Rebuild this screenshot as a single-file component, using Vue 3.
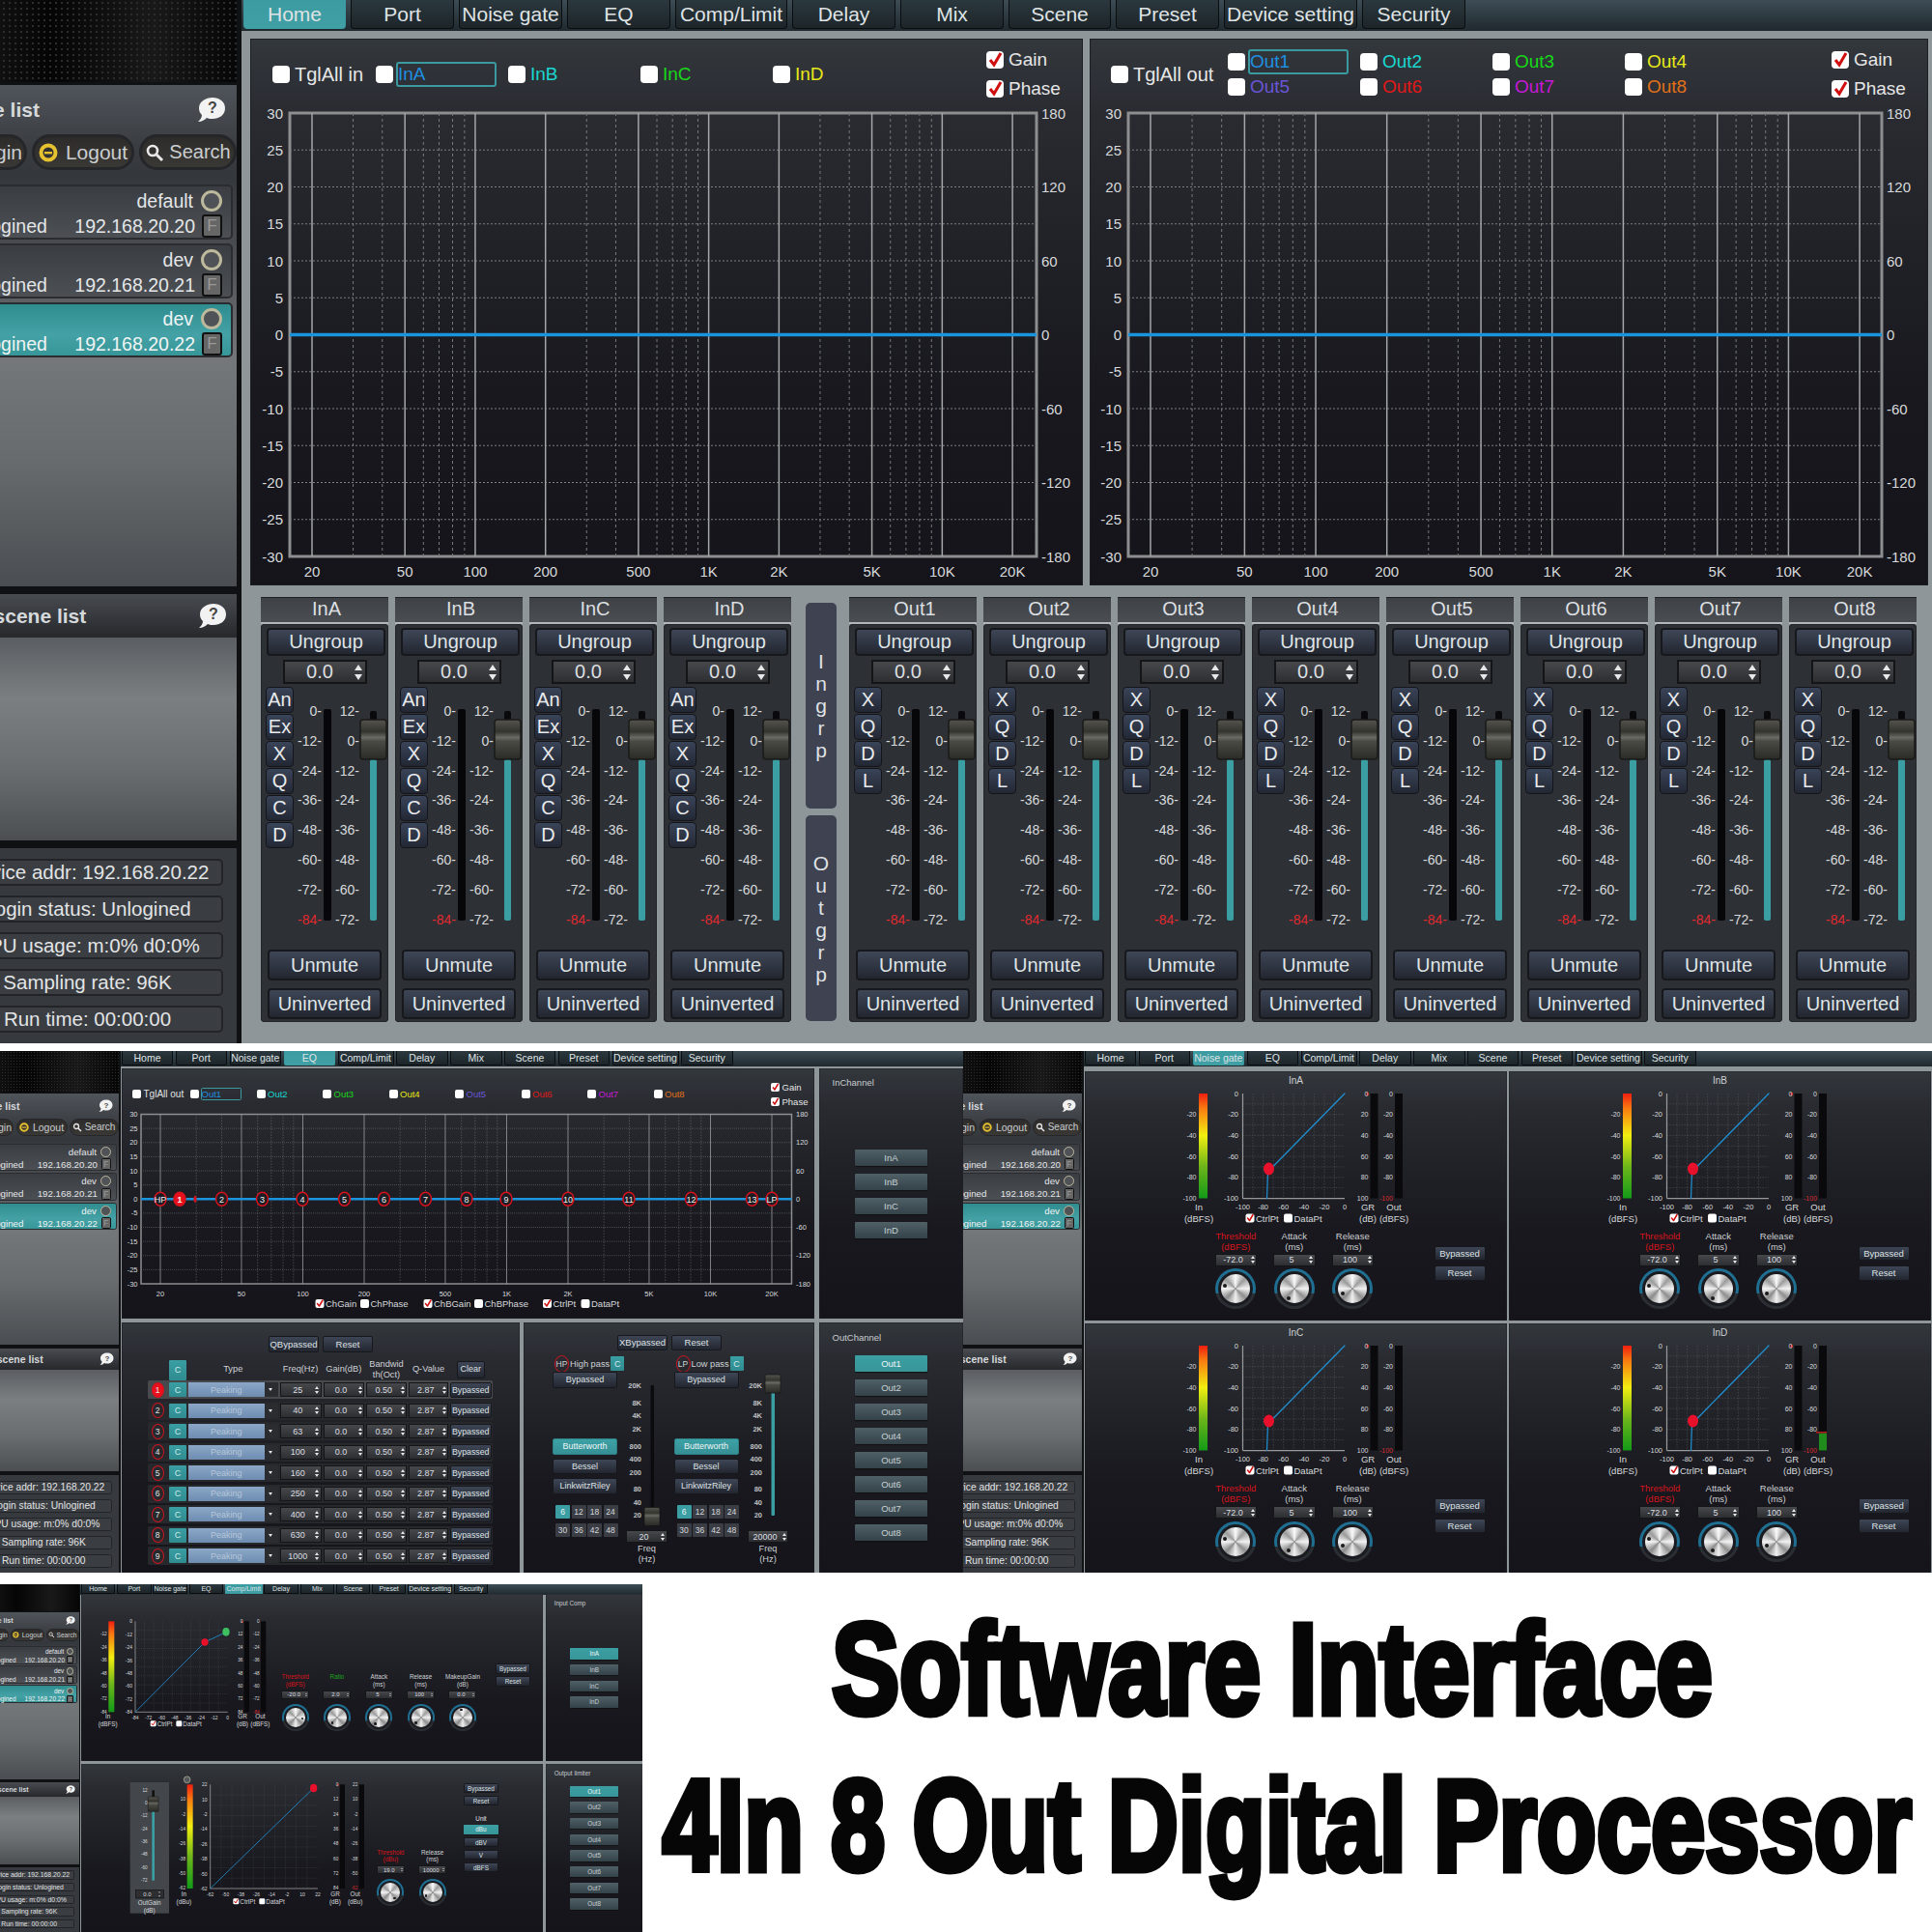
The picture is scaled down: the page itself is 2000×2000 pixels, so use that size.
<script setup>
import { h } from 'vue'

const tabs = [
  ['Home', 106], ['Port', 107], ['Noise gate', 107], ['EQ', 107], ['Comp/Limit', 116], ['Delay', 107],
  ['Mix', 107], ['Scene', 106], ['Preset', 107], ['Device setting', 138], ['Security', 107],
]
const shots = [
  { id: 'home', tab: 0 },
  { id: 'eq', tab: 3 },
  { id: 'ng', tab: 2 },
  { id: 'comp', tab: 4 },
]
const devices = [
  { name: 'default', ip: '192.168.20.20' },
  { name: 'dev', ip: '192.168.20.21' },
  { name: 'dev', ip: '192.168.20.22', on: true },
]
const status = ['Device addr: 192.168.20.22', 'Login status: Unlogined', 'CPU usage: m:0% d0:0%', 'Sampling rate: 96K', 'Run time: 00:00:00']

/* ---- tiny SVG scene renderer ---- */
function S(w, hh) { return { w, h: hh, r: [], l: [], p: [], c: [], t: [] } }
const FONT = "'Liberation Sans', Arial, sans-serif"
const Draw = (props) => {
  const s = props.s
  const el = []
  el.push(h('defs', [
    h('linearGradient', { id: 'mg', x1: 0, y1: 0, x2: 0, y2: 1 }, [
      h('stop', { offset: '0', 'stop-color': '#f01e10' }),
      h('stop', { offset: '.14', 'stop-color': '#f87a10' }),
      h('stop', { offset: '.4', 'stop-color': '#f2ee10' }),
      h('stop', { offset: '.7', 'stop-color': '#6cb51a' }),
      h('stop', { offset: '1', 'stop-color': '#129a18' }),
    ]),
    h('linearGradient', { id: 'fk', x1: 0, y1: 0, x2: 0, y2: 1 }, [
      h('stop', { offset: '0', 'stop-color': '#55544f' }),
      h('stop', { offset: '.3', 'stop-color': '#34342f' }),
      h('stop', { offset: '.45', 'stop-color': '#6a6a64' }),
      h('stop', { offset: '.55', 'stop-color': '#4a4a45' }),
      h('stop', { offset: '1', 'stop-color': '#2a2a26' }),
    ]),
  ]))
  s.r.forEach(r => el.push(h('rect', { x: r.x, y: r.y, width: r.w, height: r.h, fill: r.f, rx: r.rx || 0, stroke: r.s || 'none', 'stroke-width': r.sw || 0 })))
  s.l.forEach(l => el.push(h('line', { x1: l[0], y1: l[1], x2: l[2], y2: l[3], stroke: l[4], 'stroke-width': l[5], 'stroke-dasharray': l[6] || 'none' })))
  s.p.forEach(p => el.push(h('path', { d: p.d, stroke: p.s || 'none', 'stroke-width': p.sw || 0, fill: p.f || 'none', 'stroke-linecap': 'round', 'stroke-linejoin': 'round' })))
  s.c.forEach(c => el.push(h('ellipse', { cx: c.x, cy: c.y, rx: c.r, ry: c.ry || c.r, fill: c.f || 'none', stroke: c.s || 'none', 'stroke-width': c.sw || 0 })))
  s.t.forEach(t => el.push(h('text', { x: t.x, y: t.y, 'text-anchor': t.a || 'start', fill: t.f || '#d8dadc', 'font-size': t.z || 15, 'font-weight': t.b ? 700 : 400, 'dominant-baseline': 'central' }, t.s)))
  return h('svg', { width: s.w, height: s.h, viewBox: `0 0 ${s.w} ${s.h}`, 'font-family': FONT }, el)
}
Draw.props = ['s']

function check(s, x, y, label, on, z = 19) {
  s.r.push({ x: x - 9, y: y - 9, w: 18, h: 18, f: '#fff', rx: 4 })
  if (on) s.p.push({ d: `M${x - 5} ${y} L${x - 1} ${y + 5} L${x + 6} ${y - 7}`, s: '#d01010', sw: 3 })
  s.t.push({ x: x + 12, y, s: label, z })
}

function freqPlot(o) {
  const s = S(o.w, o.h)
  const X = f => o.x20 + o.dec * Math.log10(f / 20)
  const Y = d => o.y0 + (30 - d) / 60 * (o.y1 - o.y0)
  for (let d = 25; d >= -25; d -= 5) if (d) s.l.push([o.x0, Y(d), o.x1, Y(d), '#7c7e82', 1, '2 2'])
  ;[30, 40, 60, 70, 80, 90, 300, 400, 600, 700, 800, 900, 3000, 4000, 6000, 7000, 8000, 9000].forEach(f =>
    s.l.push([X(f), o.y0, X(f), o.y1, '#77797c', 1, '3 3']))
  const maj = [[20, '20'], [50, '50'], [100, '100'], [200, '200'], [500, '500'], [1000, '1K'], [2000, '2K'], [5000, '5K'], [10000, '10K'], [20000, '20K']]
  maj.forEach(m => {
    s.l.push([X(m[0]), o.y0, X(m[0]), o.y1, '#a4a6a8', 1.5])
    s.t.push({ x: X(m[0]), y: o.fy, s: m[1], a: 'middle' })
  })
  s.r.push({ x: o.x0, y: o.y0, w: o.x1 - o.x0, h: o.y1 - o.y0, f: 'none', s: '#8c8e90', sw: 3 })
  for (let d = 30; d >= -30; d -= 5) s.t.push({ x: o.lx, y: Y(d), s: String(d), a: 'end' })
  ;[[30, '180'], [20, '120'], [10, '60'], [0, '0'], [-10, '-60'], [-20, '-120'], [-30, '-180']].forEach(r =>
    s.t.push({ x: o.rx, y: Y(r[0]), s: r[1] }))
  s.l.push([o.x0, Y(0), o.x1, Y(0), '#1a94dc', o.bw || 3.5])
  return s
}
const plotIn = freqPlot({ w: 862, h: 506, x0: 41, x1: 814, y0: 17, y1: 476, x20: 64, dec: 241.7, lx: 34, rx: 819, fy: 491 })
const plotOut = freqPlot({ w: 868, h: 506, x0: 40, x1: 820, y0: 17, y1: 476, x20: 63, dec: 244.7, lx: 33, rx: 825, fy: 491 })

const plotEq = freqPlot({ w: 1434, h: 440, x0: 40, x1: 1387, y0: 17, y1: 368, x20: 80, dec: 422, lx: 33, rx: 1396, fy: 388, bw: 5 })
;[['HP', 80], ['1', 120], ['2', 207], ['3', 291], ['4', 374], ['5', 461], ['6', 543], ['7', 629], ['8', 714], ['9', 796], ['10', 924], ['11', 1050], ['12', 1179], ['13', 1305], ['LP', 1346]].forEach(p => {
  plotEq.c.push({ x: p[1], y: 192.5, r: 12, ry: 14, f: p[0] === '1' ? '#e8101c' : '#1c1d24', s: '#d8121c', sw: 3 })
  plotEq.t.push({ x: p[1], y: 193, s: p[0], a: 'middle', z: 18, f: '#f0f0f0', b: p[0] === '1' })
})
plotEq.c.push({ x: 152, y: 192.5, r: 3, ry: 7, f: '#d8121c' })
;[[410, 'ChGain', 1], [503, 'ChPhase', 0], [634, 'ChBGain', 1], [739, 'ChBPhase', 0], [881, 'CtrlPt', 1], [960, 'DataPt', 0]].forEach(c =>
  check(plotEq, c[0], 409, c[1], c[2]))

function dyn(o) {
  const s = S(o.w, o.h)
  const n = o.ticks.length - 1
  const Y = i => o.y0 + i / n * (o.y1 - o.y0)
  const gw = o.gx1 - o.gx0
  for (let i = 1; i < 10; i++) {
    const x = o.gx0 + gw * i / 10
    const y = o.y0 + (o.y1 - o.y0) * i / 10
    s.l.push([x, o.y0, x, o.y1, '#5c5e62', 1, '3 3'])
    s.l.push([o.gx0, y, o.gx1, y, '#5c5e62', 1, '3 3'])
  }
  s.l.push([o.gx0, o.y0, o.gx0, o.y1, '#96989a', 2.5])
  s.l.push([o.gx0, o.y1, o.gx1, o.y1, '#96989a', 2.5])
  s.r.push({ x: o.inX, y: o.y0, w: 18, h: o.y1 - o.y0, f: 'url(#mg)' })
  s.r.push({ x: o.grX, y: o.y0, w: 16, h: o.y1 - o.y0, f: '#0a0a0c' })
  s.r.push({ x: o.outX, y: o.y0, w: 16, h: o.y1 - o.y0, f: '#0a0a0c' })
  o.ticks.forEach((t, i) => {
    if (i) s.t.push({ x: o.inX - 5, y: Y(i), s: t, a: 'end', z: 14 })
    s.t.push({ x: o.gx0 - 9, y: Y(i), s: t, a: 'end', z: 15 })
    const tx = o.gx0 + gw * i / n
    s.t.push({ x: tx, y: o.y1 + 17, s: o.ticks[n - i], a: 'middle', z: 15 })
    s.t.push({ x: o.grX - 4, y: Y(i), s: o.gr ? o.gr[i] : t.replace('-', ''), a: 'end', z: 14 })
    if (i < n) s.t.push({ x: o.outX - 4, y: Y(i), s: t, a: 'end', z: 14 })
  })
  s.r.push({ x: o.grX - 8, y: o.y0 - 2, w: 5, h: 6, f: '#d8181c', rx: 2 })
  s.t.push({ x: o.outX - 4, y: o.y1, s: o.ticks[n], a: 'end', z: 14, f: '#d82a30' })
  s.t.push({ x: o.inL, y: o.ly, s: 'In', a: 'middle', z: 19 })
  s.t.push({ x: o.inL, y: o.ly + 23, s: o.unit, a: 'middle', z: 19 })
  s.t.push({ x: o.grL, y: o.ly, s: 'GR', a: 'middle', z: 19 })
  s.t.push({ x: o.grL, y: o.ly + 23, s: '(dB)', a: 'middle', z: 19 })
  s.t.push({ x: o.outL, y: o.ly, s: 'Out', a: 'middle', z: 19 })
  s.t.push({ x: o.outL, y: o.ly + 23, s: o.unit, a: 'middle', z: 19 })
  check(s, o.cb1, o.ly + 23, 'CtrlPt', 1)
  check(s, o.cb2, o.ly + 23, 'DataPt', 0)
  s.p.push({ d: o.curve, s: '#1f8fd0', sw: 2.5 })
  o.dots.forEach(d => s.c.push({ x: d[0], y: d[1], r: 11, ry: d[3] || 11, f: d[2] }))
  return s
}
const t100 = ['0', '-20', '-40', '-60', '-80', '-100']
const ngBase = { w: 874, h: 290, ticks: t100, y0: 16, y1: 233, inX: 236, gx0: 327, gx1: 538, grX: 591, outX: 642, inL: 236, grL: 586, outL: 640, ly: 251, unit: '(dBFS)', cb1: 342, cb2: 421, curve: 'M377 233 L379 178 L538 16', dots: [[381, 172, '#e8102a', 13]] }
const ngScene = dyn(ngBase)
const ngSig = dyn(ngBase)
ngSig.r.push({ x: 642, y: 197, w: 16, h: 36, f: '#1f8c1c' })
ngSig.r.push({ x: 636, y: 194, w: 22, h: 3, f: '#b81c1c' })
const ngPanels = [['InA', ngScene], ['InB', ngScene], ['InC', ngScene], ['InD', ngSig]]

const t84 = ['0', '-12', '-24', '-36', '-48', '-60', '-72', '-84']
const compTop = dyn({ w: 601, h: 518, ticks: t84, y0: 85, y1: 367, inX: 85, gx0: 168, gx1: 455, grX: 506, outX: 558, inL: 83, grL: 501, outL: 556, ly: 380, unit: '(dBFS)', cb1: 224, cb2: 304, curve: 'M168 367 L384 150 L452 118', dots: [[384, 150, '#e8102a'], [450, 118, '#3cc060', 13]] })
const t62 = ['22', '10', '-2', '-14', '-26', '-38', '-50', '-62']
const compLow = dyn({ w: 897, h: 522, ticks: t62, gr: ['0', '12', '24', '36', '48', '60', '72', '84'], y0: 64, y1: 387, inX: 329, gx0: 401, gx1: 735, grX: 803, outX: 863, inL: 319, grL: 789, outL: 851, ly: 404, unit: '(dBu)', cb1: 481, cb2: 562, curve: 'M401 387 L722 75', dots: [[722, 75, '#e8102a', 13]] })
compLow.r.unshift({ x: 152, y: 57, w: 121, h: 407, f: '#43474b' })
;['12', '0', '-12', '-24', '-36', '-48', '-60', '-72'].forEach((t, i) => compLow.t.push({ x: 206, y: 82 + i * 40, s: t, a: 'end', z: 14 }))
compLow.r.push({ x: 220, y: 82, w: 8, h: 40, f: '#111' })
compLow.r.push({ x: 220, y: 145, w: 8, h: 217, f: '#3a9ea3' })
compLow.r.push({ x: 208, y: 102, w: 32, h: 46, f: 'url(#fk)', s: '#111', sw: 1.5, rx: 2 })
compLow.r.push({ x: 169, y: 392, w: 87, h: 25, f: '#2c2e32', s: '#111', sw: 2 })
compLow.t.push({ x: 205, y: 405, s: '0.0', a: 'middle', z: 18 })
compLow.p.push({ d: 'M240 400 l3 -4 l3 4 Z M240 409 l3 4 l3 -4 Z', f: '#ddd' })
compLow.t.push({ x: 212, y: 432, s: 'OutGain', a: 'middle', z: 19 })
compLow.t.push({ x: 212, y: 455, s: '(dB)', a: 'middle', z: 19 })
compLow.c.push({ x: 329, y: 49, r: 10, f: '#55585a', s: '#a8aa9a', sw: 2.5 })

/* strip meter */
function stripScene() {
  const s = S(96, 250)
  const st = 30.8
  s.r.push({ x: 29, y: 23, w: 8, h: 219, f: '#07070a', rx: 2 })
  s.r.push({ x: 77, y: 25, w: 7, h: 50, f: '#0a0a0c', rx: 2 })
  s.r.push({ x: 77, y: 75, w: 7, h: 167, f: '#3a9ea3', rx: 2 })
  s.r.push({ x: 67, y: 34, w: 27, h: 41, f: 'url(#fk)', s: '#1a1a18', sw: 1.5, rx: 3 })
  ;['0-', '-12-', '-24-', '-36-', '-48-', '-60-', '-72-'].forEach((t, i) => s.t.push({ x: 27, y: 25 + i * st, s: t, a: 'end', z: 14 }))
  s.t.push({ x: 27, y: 25 + 7 * st, s: '-84-', a: 'end', z: 14, f: '#e02a30' })
  ;['12-', '0-', '-12-', '-24-', '-36-', '-48-', '-60-', '-72-'].forEach((t, i) => s.t.push({ x: 66, y: 25 + i * st, s: t, a: 'end', z: 14 }))
  return s
}
const meter = stripScene()
const strips = (names, keys) => names.map(n => ({ n, keys }))
const inStrips = strips(['InA', 'InB', 'InC', 'InD'], ['An', 'Ex', 'X', 'Q', 'C', 'D'])
const outStrips = strips(['Out1', 'Out2', 'Out3', 'Out4', 'Out5', 'Out6', 'Out7', 'Out8'], ['X', 'Q', 'D', 'L'])

const inCh = [['InA', '#1e8fe0'], ['InB', '#19d8d0'], ['InC', '#18d818'], ['InD', '#e8e818']]
const outCh = [['Out1', '#1e8fe0'], ['Out2', '#19d8d0'], ['Out3', '#18d818'], ['Out4', '#e8e818'], ['Out5', '#6a55d8'], ['Out6', '#e01818'], ['Out7', '#c818d8'], ['Out8', '#e07018']]

/* EQ table */
const eqRows = ['25', '40', '63', '100', '160', '250', '400', '630', '1000'].map((f, i) => ({ n: i + 1, f }))

function xFilter(isLP) {
  const s = S(115, 325)
  const sc = [['20K', 26], ['8K', 62], ['4K', 88], ['2K', 116], ['800', 152], ['400', 179], ['200', 207], ['80', 241], ['40', 269], ['20', 295]]
  sc.forEach(v => s.t.push({ x: 42, y: v[1], s: v[0], a: 'end', z: 15, b: true, f: '#bfc1c3' }))
  s.r.push({ x: 61, y: 26, w: 7, h: 270, f: isLP ? '#3a9ea3' : '#0b0b0e', rx: 2 })
  s.r.push({ x: 48, y: isLP ? 4 : 279, w: 32, h: 38, f: 'url(#fk)', s: '#161616', sw: 1.5, rx: 3 })
  return s
}
const xFilters = [
  { tag: 'HP', name: 'High pass', scene: xFilter(false), f: '20' },
  { tag: 'LP', name: 'Low pass', scene: xFilter(true), f: '20000' },
]
const slopes = ['6', '12', '18', '24', '30', '36', '42', '48']

const dot = (a) => ({ left: 50 + 38 * Math.cos(a * Math.PI / 180) + '%', top: 50 + 38 * Math.sin(a * Math.PI / 180) + '%' })
const ngKnobs = [
  { a: 'Threshold', b: '(dBFS)', v: '-72.0', red: 1, d: dot(195) },
  { a: 'Attack', b: '(ms)', v: '5', d: dot(120) },
  { a: 'Release', b: '(ms)', v: '100', d: dot(155) },
]
const compKnobs = [
  { a: 'Threshold', b: '(dBFS)', v: '-20.0', red: 1, d: dot(10) },
  { a: 'Ratio', b: '', v: '2.0', green: 1, d: dot(130) },
  { a: 'Attack', b: '(ms)', v: '5', d: dot(120) },
  { a: 'Release', b: '(ms)', v: '100', d: dot(130) },
  { a: 'MakeupGain', b: '(dB)', v: '0.0', d: dot(260) },
]
const limKnobs = [
  { a: 'Threshold', b: '(dBu)', v: '19.0', red: 1, d: dot(55) },
  { a: 'Release', b: '(ms)', v: '10000', d: dot(150) },
]
</script>

<template>
  <div class="page">
    <div v-for="s in shots" :key="s.id" class="frame" :class="'f-' + s.id">
      <div class="win">
        <!-- sidebar -->
        <aside class="side">
          <div class="side-in">
            <div class="logo"></div>
            <section class="dev-panel">
              <div class="side-head">
                <b class="side-title t-dev">Device list</b>
                <svg class="help" width="30" height="28" viewBox="0 0 30 28"><path d="M16 1c7 0 13 4 13 11s-6 11-13 11c-2 0-4 0-6-1-2 2-5 4-9 4 2-2 4-4 4-7C3 17 2 15 2 12 2 5 9 1 16 1z" fill="#f2f2f2"/><text x="16" y="17" font-size="16" font-weight="700" text-anchor="middle" fill="#444">?</text></svg>
              </div>
              <div class="pills">
                <span class="pill p-login">Login</span>
                <span class="pill p-logout"><svg width="20" height="20" viewBox="0 0 20 20"><circle cx="10" cy="10" r="7.5" fill="none" stroke="#e6c230" stroke-width="4"/><rect x="6" y="9" width="8" height="2.4" fill="#e6c230"/></svg>Logout</span>
                <span class="pill p-search"><svg width="20" height="20" viewBox="0 0 20 20"><circle cx="8" cy="8" r="5" fill="none" stroke="#e8e8e8" stroke-width="2.6"/><path d="M12 12l6 6" stroke="#e8e8e8" stroke-width="3"/></svg>Search</span>
              </div>
              <div class="dev-list">
                <div v-for="(d, i) in devices" :key="i" class="dev" :class="{ on: d.on }">
                  <div class="dev-line end"><span>{{ d.name }}</span><i class="led"></i></div>
                  <div class="dev-line between"><span>Unlogined</span><span class="ip">{{ d.ip }}<em class="fbox">F</em></span></div>
                </div>
              </div>
            </section>
            <section class="scene-head">
              <b class="side-title t-scene">Device scene list</b>
              <svg class="help" width="30" height="28" viewBox="0 0 30 28"><path d="M16 1c7 0 13 4 13 11s-6 11-13 11c-2 0-4 0-6-1-2 2-5 4-9 4 2-2 4-4 4-7C3 17 2 15 2 12 2 5 9 1 16 1z" fill="#f2f2f2"/><text x="16" y="17" font-size="16" font-weight="700" text-anchor="middle" fill="#444">?</text></svg>
            </section>
            <section class="scene-body"></section>
            <section class="stat-panel">
              <div v-for="t in status" :key="t" class="stat">{{ t }}</div>
            </section>
          </div>
        </aside>

        <div class="main">
          <nav class="tabs">
            <span v-for="(t, i) in tabs" :key="t[0]" class="tab" :class="{ on: i === s.tab }" :style="{ width: t[1] + 'px' }">{{ t[0] }}</span>
          </nav>

          <!-- HOME -->
          <div v-if="s.id === 'home'" class="home">
            <div class="home-charts">
              <div class="dark chart-l">
                <div class="ch-head">
                  <span class="cbl tgl-in"><i class="cb"></i>TglAll in</span>
                  <div class="ch-grid four">
                    <span v-for="(c, i) in inCh" :key="c[0]" class="cbl" :style="{ color: c[1] }"><i class="cb"></i><span :class="{ box: i === 0 }">{{ c[0] }}</span></span>
                  </div>
                  <div class="gp">
                    <span class="cbl"><i class="cb"><svg width="18" height="18" viewBox="0 0 18 18"><path d="M4 9l4 5 7-12" fill="none" stroke="#d01010" stroke-width="3"/></svg></i>Gain</span>
                    <span class="cbl"><i class="cb"><svg width="18" height="18" viewBox="0 0 18 18"><path d="M4 9l4 5 7-12" fill="none" stroke="#d01010" stroke-width="3"/></svg></i>Phase</span>
                  </div>
                </div>
                <Draw :s="plotIn" class="draw" />
              </div>
              <div class="dark chart-r">
                <div class="ch-head">
                  <span class="cbl tgl-out"><i class="cb"></i>TglAll out</span>
                  <div class="ch-grid four two">
                    <span v-for="(c, i) in outCh" :key="c[0]" class="cbl" :style="{ color: c[1] }"><i class="cb"></i><span :class="{ box: i === 0 }">{{ c[0] }}</span></span>
                  </div>
                  <div class="gp">
                    <span class="cbl"><i class="cb"><svg width="18" height="18" viewBox="0 0 18 18"><path d="M4 9l4 5 7-12" fill="none" stroke="#d01010" stroke-width="3"/></svg></i>Gain</span>
                    <span class="cbl"><i class="cb"><svg width="18" height="18" viewBox="0 0 18 18"><path d="M4 9l4 5 7-12" fill="none" stroke="#d01010" stroke-width="3"/></svg></i>Phase</span>
                  </div>
                </div>
                <Draw :s="plotOut" class="draw" />
              </div>
            </div>
            <div class="strips">
              <div v-for="st in inStrips" :key="st.n" class="strip">
                <div class="strip-h">{{ st.n }}</div>
                <div class="strip-b">
                  <div class="sbtn ungroup">Ungroup</div>
                  <div class="spin s-strip"><span>0.0</span><i class="arrows"><u></u><s></s></i></div>
                  <div class="strip-mid">
                    <div class="keys"><span v-for="k in st.keys" :key="k" class="key">{{ k }}</span></div>
                    <Draw :s="meter" class="draw" />
                  </div>
                  <div class="sbtn big mt22">Unmute</div>
                  <div class="sbtn big">Uninverted</div>
                </div>
              </div>
              <div class="grp">
                <div class="grp-cell"><span v-for="c in 'Ingrp'" :key="c">{{ c }}</span></div>
                <div class="grp-cell"><span v-for="c in 'Outgrp'" :key="c">{{ c }}</span></div>
              </div>
              <div v-for="st in outStrips" :key="st.n" class="strip">
                <div class="strip-h">{{ st.n }}</div>
                <div class="strip-b">
                  <div class="sbtn ungroup">Ungroup</div>
                  <div class="spin s-strip"><span>0.0</span><i class="arrows"><u></u><s></s></i></div>
                  <div class="strip-mid">
                    <div class="keys"><span v-for="k in st.keys" :key="k" class="key">{{ k }}</span></div>
                    <Draw :s="meter" class="draw" />
                  </div>
                  <div class="sbtn big mt22">Unmute</div>
                  <div class="sbtn big">Uninverted</div>
                </div>
              </div>
            </div>
          </div>

          <!-- EQ -->
          <div v-else-if="s.id === 'eq'" class="eq">
            <div class="dark eq-chart">
              <div class="ch-head eq-head">
                <span class="cbl tgl-eq"><i class="cb"></i>TglAll out</span>
                <div class="ch-row">
                  <span v-for="(c, i) in outCh" :key="c[0]" class="cbl" :style="{ color: c[1] }"><i class="cb"></i><span :class="{ box: i === 0 }">{{ c[0] }}</span></span>
                </div>
                <div class="gp">
                  <span class="cbl"><i class="cb"><svg width="18" height="18" viewBox="0 0 18 18"><path d="M4 9l4 5 7-12" fill="none" stroke="#d01010" stroke-width="3"/></svg></i>Gain</span>
                  <span class="cbl"><i class="cb"><svg width="18" height="18" viewBox="0 0 18 18"><path d="M4 9l4 5 7-12" fill="none" stroke="#d01010" stroke-width="3"/></svg></i>Phase</span>
                </div>
              </div>
              <Draw :s="plotEq" class="draw" />
            </div>
            <div class="dark chp">
              <div class="chp-t">InChannel</div>
              <div class="chp-list far"><span v-for="c in inCh" :key="c[0]" class="chb">{{ c[0] }}</span></div>
            </div>
            <div class="eq-bottom">
              <div class="dark q-panel">
                <div class="q-top"><span class="sbtn w104">QBypassed</span><span class="sbtn w104">Reset</span></div>
                <div class="q-grid q-header">
                  <span></span>
                  <span class="cbtn tall">C</span>
                  <span class="hc">Type</span>
                  <span class="hc">Freq(Hz)</span>
                  <span class="hc">Gain(dB)</span>
                  <span class="hc">Bandwid<br>th(Oct)</span>
                  <span class="hc">Q-Value</span>
                  <span class="hc"><span class="sbtn clear">Clear</span></span>
                </div>
                <div v-for="r in eqRows" :key="r.n" class="q-grid q-row" :class="{ first: r.n === 1 }">
                  <span class="num" :class="{ on: r.n === 1 }">{{ r.n }}</span>
                  <span class="cbtn">C</span>
                  <span class="combo"><span class="combo-v">Peaking</span><i class="combo-a"></i></span>
                  <span class="spin"><span>{{ r.f }}</span><i class="arrows"><u></u><s></s></i></span>
                  <span class="spin"><span>0.0</span><i class="arrows"><u></u><s></s></i></span>
                  <span class="spin"><span>0.50</span><i class="arrows"><u></u><s></s></i></span>
                  <span class="spin"><span>2.87</span><i class="arrows"><u></u><s></s></i></span>
                  <span class="sbtn byp">Bypassed</span>
                </div>
              </div>
              <div class="dark x-panel">
                <div class="x-top"><span class="sbtn w104">XBypassed</span><span class="sbtn w104">Reset</span></div>
                <div class="x-cols">
                  <div v-for="f in xFilters" :key="f.tag" class="xf">
                    <div class="xf-left">
                      <div class="xf-head"><span class="num small">{{ f.tag }}</span><span>{{ f.name }}</span><span class="cbtn mini">C</span></div>
                      <span class="sbtn xb">Bypassed</span>
                      <div class="xf-types">
                        <span class="sbtn xb on">Butterworth</span>
                        <span class="sbtn xb">Bessel</span>
                        <span class="sbtn xb">LinkwitzRiley</span>
                      </div>
                      <div class="slopes"><span v-for="(v, i) in slopes" :key="v" class="slope" :class="{ on: i === 0 }">{{ v }}</span></div>
                    </div>
                    <div class="xf-right">
                      <Draw :s="f.scene" class="draw" />
                      <span class="spin s-x"><span>{{ f.f }}</span><i class="arrows"><u></u><s></s></i></span>
                      <div class="xf-lab">Freq<br>(Hz)</div>
                    </div>
                  </div>
                </div>
              </div>
            </div>
            <div class="dark chp">
              <div class="chp-t">OutChannel</div>
              <div class="chp-list near"><span v-for="(c, i) in outCh" :key="c[0]" class="chb" :class="{ on: i === 0 }">{{ c[0] }}</span></div>
            </div>
          </div>

          <!-- NOISE GATE -->
          <div v-else-if="s.id === 'ng'" class="ng">
            <div v-for="p in ngPanels" :key="p[0]" class="dark ng-panel">
              <div class="ng-title">{{ p[0] }}</div>
              <Draw :s="p[1]" class="draw" />
              <div class="ng-row">
                <div v-for="k in ngKnobs" :key="k.a" class="kcol ng-k">
                  <div class="klab" :class="{ red: k.red }">{{ k.a }}<br>{{ k.b }}</div>
                  <span class="spin kspin"><span>{{ k.v }}</span><i class="arrows"><u></u><s></s></i></span>
                  <div class="knob"><div class="knob-in"><div class="knob-face"><i class="knob-dot" :style="k.d"></i></div></div></div>
                </div>
                <div class="ng-side"><span class="sbtn side-b">Bypassed</span><span class="sbtn side-b">Reset</span></div>
              </div>
            </div>
          </div>

          <!-- COMP -->
          <div v-else class="comp">
            <div class="dark comp-panel">
              <Draw :s="compTop" class="draw" />
              <div class="cp-knobs">
                <div v-for="k in compKnobs" :key="k.a" class="kcol cp-k">
                  <div class="klab" :class="{ red: k.red, green: k.green }">{{ k.a }}<br>{{ k.b }}</div>
                  <span class="spin kspin"><span>{{ k.v }}</span><i class="arrows"><u></u><s></s></i></span>
                  <div class="knob"><div class="knob-in"><div class="knob-face"><i class="knob-dot" :style="k.d"></i></div></div></div>
                </div>
              </div>
              <div class="cp-side"><span class="sbtn side-b">Bypassed</span><span class="sbtn side-b">Reset</span></div>
            </div>
            <div class="dark chp">
              <div class="chp-t">Input Comp</div>
              <div class="chp-list far"><span v-for="(c, i) in inCh" :key="c[0]" class="chb" :class="{ on: i === 0 }">{{ c[0] }}</span></div>
            </div>
            <div class="dark comp-panel">
              <Draw :s="compLow" class="draw" />
              <div class="cp-knobs low">
                <div v-for="k in limKnobs" :key="k.a" class="kcol cp-k">
                  <div class="klab" :class="{ red: k.red }">{{ k.a }}<br>{{ k.b }}</div>
                  <span class="spin kspin"><span>{{ k.v }}</span><i class="arrows"><u></u><s></s></i></span>
                  <div class="knob"><div class="knob-in"><div class="knob-face"><i class="knob-dot" :style="k.d"></i></div></div></div>
                </div>
              </div>
              <div class="cp-side low">
                <span class="sbtn side-b">Bypassed</span><span class="sbtn side-b">Reset</span>
                <span class="unit">Unit</span>
                <span class="chb u on">dBu</span><span class="sbtn side-b">dBV</span><span class="sbtn side-b">V</span><span class="sbtn side-b">dBFS</span>
              </div>
            </div>
            <div class="dark chp">
              <div class="chp-t">Output limiter</div>
              <div class="chp-list near"><span v-for="(c, i) in outCh" :key="c[0]" class="chb" :class="{ on: i === 0 }">{{ c[0] }}</span></div>
            </div>
          </div>
        </div>
      </div>
    </div>

    <div class="promo">
      <span class="promo-a">Software Interface</span>
      <span class="promo-b">4In 8 Out Digital Processor</span>
    </div>
  </div>
</template>

<style scoped>
.page { width: 2000px; height: 2000px; overflow: hidden; background: #fff; display: flex; flex-wrap: wrap; align-content: flex-start; font-family: 'Liberation Sans', Arial, sans-serif; color: #e2e4e6; }
.frame { overflow: hidden; flex: none; }
.f-home { width: 2000px; height: 1080px; }
.f-eq { width: 997px; height: 540px; margin-top: 8px; }
.f-ng { width: 1003px; height: 540px; margin-top: 8px; }
.f-comp { width: 665px; height: 360px; margin-top: 12px; }
.f-eq .win, .f-ng .win { zoom: 0.5; }
.f-comp .win { zoom: 0.33333; }
.win { display: flex; width: 2006px; height: 1080px; background: #8f969a; font-size: 21px; }
.draw { display: block; flex: none; }

/* sidebar */
.side { width: 250px; flex: none; background: #101113; overflow: hidden; }
.side-in { width: 430px; margin-left: -185px; display: flex; flex-direction: column; height: 1080px; }
.logo { height: 85px; margin-bottom: 3px; background: radial-gradient(circle, #2c2c2c 1px, transparent 1.6px) 0 0/6px 6px, linear-gradient(90deg, #060606, #1c1c1c 30%, #050505 55%, #191919 80%, #060606); background-color: #000; }
.dev-panel { height: 519px; flex: none; display: flex; flex-direction: column; background: linear-gradient(#50555b, #3a3d42 12%, #34373b 18%, #4e5256 36%, #74777a 55%, #686b6e 75%, #4a4d51 100%); }
.side-head { height: 51px; display: flex; align-items: center; justify-content: space-between; padding: 0 11px 0 122px; flex: none; }
.side-title { font-size: 21px; color: #d6d9dc; }
.pills { display: flex; justify-content: flex-end; gap: 5px; height: 37px; flex: none; }
.pill { display: flex; align-items: center; justify-content: center; gap: 8px; border-radius: 19px; background: linear-gradient(#2e2c2a, #3a3835); border: 3px solid #24262a; box-sizing: border-box; color: #c9cdd0; }
.p-login { width: 100px; justify-content: flex-end; padding-right: 2px; }
.p-logout { width: 106px; }
.p-search { width: 101px; gap: 5px; font-size: 20px; }
.dev-list { display: flex; flex-direction: column; gap: 4px; margin: 15px 4px 0 auto; width: 301px; }
.dev { height: 57px; box-sizing: border-box; border: 2px solid #2a2c30; border-radius: 5px; background: linear-gradient(#3a3e43, #4c4f54); padding: 2px 9px 0 0; color: #e4e6e8; }
.dev.on { background: linear-gradient(#2f8d90, #44a2a6 60%, #379698); color: #f0f4f4; }
.dev-line { display: flex; align-items: center; height: 26px; font-size: 19.5px; }
.dev-line.end { justify-content: flex-end; }
.dev-line.between { justify-content: space-between; padding-left: 19px; }
.led { width: 22px; height: 22px; box-sizing: border-box; border-radius: 50%; border: 3px solid #bdb99c; background: #4f5256; margin-left: 8px; }
.ip { display: flex; align-items: center; }
.fbox { width: 21px; height: 24px; box-sizing: border-box; margin-left: 7px; border: 2px solid #111; background: #666; color: #999; font-style: normal; font-size: 17px; text-align: center; line-height: 20px; border-radius: 3px; }
.scene-head { margin-top: 8px; height: 45px; flex: none; display: flex; align-items: center; justify-content: space-between; padding: 0 10px 0 105px; background: linear-gradient(#484b50, #26282c); }
.t-scene { white-space: nowrap; }
.scene-body { height: 210px; flex: none; background: linear-gradient(#5a5e62, #7c7f82 30%, #6a6d70 65%, #4c4f52); }
.stat-panel { margin-top: 8px; flex: 1; background: #36393d; padding-top: 11px; display: flex; flex-direction: column; gap: 10px; align-items: flex-end; }
.stat { width: 281px; margin-right: 14px; height: 28px; box-sizing: border-box; border: 2px solid #222428; border-radius: 5px; background: #3a3d41; display: flex; align-items: center; justify-content: center; font-size: 20.5px; white-space: nowrap; }

/* main */
.main { flex: 1; min-width: 0; display: flex; flex-direction: column; }
.tabs { height: 32px; flex: none; display: flex; gap: 5px; padding-left: 2px; background: linear-gradient(#3d4c55, #1f292e); }
.tab { height: 30px; flex: none; box-sizing: border-box; border: 1px solid #0b0e10; border-top: none; border-radius: 0 0 4px 4px; background: linear-gradient(#2b383e, #1d2529); display: flex; align-items: center; justify-content: center; font-size: 21px; color: #dfe3e5; white-space: nowrap; }
.tab.on { background: linear-gradient(#3b9ba0, #41a0a5); border-color: #3b9ba0; }
.dark { background: linear-gradient(#33383d, #292b31 14%, #18181e 65%, #14141a); box-shadow: inset 0 0 0 1px #1d1f24; }

/* channel heads */
.ch-head { display: flex; align-items: center; height: 60px; padding-top: 14px; box-sizing: border-box; }
.cbl { display: flex; align-items: center; gap: 5px; font-size: 19px; white-space: nowrap; }
.cb { width: 18px; height: 18px; flex: none; background: #fff; border-radius: 4px; display: block; }
.box { width: 104px; height: 26px; box-sizing: border-box; border: 2px solid #3a9a9f; border-radius: 3px; margin-left: -2px; display: flex; align-items: center; }
.tgl-in { width: 107px; margin-left: 23px; flex: none; color: #e6e6e6; font-size: 20px; }
.tgl-out { width: 121px; margin-left: 22px; flex: none; color: #e6e6e6; font-size: 20px; }
.ch-grid { display: grid; grid-template-columns: repeat(4, 137px); }
.ch-grid.two { row-gap: 2px; margin-top: -2px; }
.gp { margin-left: auto; width: 100px; display: flex; flex-direction: column; gap: 8px; flex: none; color: #e6e6e6; }

/* home */
.home { flex: 1; display: flex; flex-direction: column; padding: 8px 0 0 9px; }
.home-charts { display: flex; gap: 7px; height: 566px; flex: none; }
.chart-l { width: 862px; flex: none; }
.chart-r { width: 868px; flex: none; }
.strips { display: flex; gap: 7px; margin: 12px 0 0 11px; }
.strip { width: 132px; flex: none; height: 440px; }
.strip-h { height: 25px; background: linear-gradient(#3e4246, #4a4e52); border-top: 1px solid #1e2022; border-bottom: 2px solid #b3b7ba; box-sizing: content-box; text-align: center; line-height: 23px; padding-left: 4px; width: 128px; font-size: 20px; color: #dcdfe1; }
.strip-b { height: 412px; background: #2d3035; border-radius: 4px; padding: 4px 0 0; box-sizing: border-box; display: flex; flex-direction: column; box-shadow: inset 0 0 0 1px #232528; }
.sbtn { display: flex; align-items: center; justify-content: center; background: linear-gradient(#3e4656, #222630); border: 2px solid #17181c; border-radius: 4px; box-sizing: border-box; color: #dfe3e6; white-space: nowrap; font-size: 19px; }
.ungroup { width: 123px; height: 29px; margin-left: 6px; font-size: 20px; flex: none; }
.spin { display: flex; align-items: center; justify-content: space-between; background: linear-gradient(#46484c, #2c2e32); border: 2px solid #141517; box-sizing: border-box; font-size: 18px; color: #dcdfe1; padding: 0 3px 0 0; height: 28px; }
.spin > span { flex: 1; text-align: center; }
.s-strip { width: 87px; height: 25px; margin: 4px 0 0 23px; font-size: 20px; flex: none; }
.arrows { display: flex; flex-direction: column; gap: 4px; flex: none; }
.arrows u, .arrows s { display: block; width: 0; height: 0; border-left: 4px solid transparent; border-right: 4px solid transparent; }
.arrows u { border-bottom: 6px solid #e8e8e8; }
.arrows s { border-top: 6px solid #e8e8e8; }
.strip-mid { display: flex; height: 250px; margin-top: 3px; padding-left: 5px; flex: none; }
.keys { width: 29px; margin-right: 2px; display: flex; flex-direction: column; gap: 1px; flex: none; }
.key { height: 27px; background: linear-gradient(#3a4458, #222733); border: 1px solid #14151a; border-radius: 4px; box-sizing: border-box; display: flex; align-items: center; justify-content: center; font-size: 20px; color: #e8eaec; }
.big { width: 118px; height: 32px; margin: 8px 0 0 7px; font-size: 20px; flex: none; }
.mt22 { margin-top: 22px; }
.grp { display: flex; flex-direction: column; gap: 7px; margin: 6px 6px 0 8px; width: 32px; flex: none; }
.grp-cell { height: 213px; border-radius: 5px; background: #3e4251; display: flex; flex-direction: column; align-items: center; justify-content: center; font-size: 21px; line-height: 23px; color: #dfe1e4; }

/* EQ */
.eq { flex: 1; display: grid; grid-template-columns: 1434px 298px; grid-template-rows: 518px 518px; gap: 9px 10px; padding: 3px 0 0 2px; }
.eq-head { height: 78px; padding-top: 31px; }
.tgl-eq { width: 120px; margin-left: 22px; flex: none; font-size: 20px; }
.ch-row { display: grid; grid-template-columns: repeat(8, 137px); }
.ch-row .box { width: 85px; }
.eq-head .gp { width: 90px; }
.chp-t { padding: 19px 0 0 27px; font-size: 19px; height: 43px; box-sizing: border-box; color: #c9ccd0; }
.chp-list { display: flex; flex-direction: column; gap: 16px; align-items: center; }
.chp-list.far { margin-top: 126px; }
.chp-list.near { margin-top: 25px; }
.chb { width: 149px; height: 34px; display: flex; align-items: center; justify-content: center; font-size: 19px; border-radius: 2px; color: #c8d2d4; background: linear-gradient(#4f6066, #34424a); box-shadow: 0 2px 2px #111; }
.chb.on { background: linear-gradient(#3c9fa3, #379598); color: #eef6f6; }
.eq-bottom { display: flex; gap: 9px; }
.q-panel { width: 823px; flex: none; }
.q-top { display: flex; gap: 8px; padding: 28px 0 0 304px; }
.w104 { width: 104px; height: 33px; }
.q-grid { display: grid; grid-template-columns: 40px 36px 185px 86px 85px 84px 82px 85px; gap: 4px; margin-left: 54px; width: 714px; align-items: center; }
.q-header { margin-top: 14px; height: 42px; }
.hc { text-align: center; font-size: 18.5px; line-height: 23px; color: #cfd2d5; display: flex; justify-content: center; }
.hc:nth-child(6) { display: block; }
.clear { width: 57px; height: 36px; font-size: 18px; }
.cbtn { height: 30px; width: 36px; background: linear-gradient(#3a9ea3, #2f8c90); display: flex; align-items: center; justify-content: center; color: #cfe9ea; font-size: 18px; border-radius: 2px; }
.cbtn.tall { height: 42px; }
.cbtn.mini { width: 28px; height: 30px; flex: none; }
.q-row { height: 38px; margin-top: 5px; background: #26282c; border-radius: 3px; }
.q-row.first { margin-top: 3px; background: #47494d; }
.num { justify-self: center; width: 26px; height: 32px; box-sizing: border-box; border: 3px solid #cf1420; border-radius: 50%; display: flex; align-items: center; justify-content: center; font-size: 17px; }
.num.on { background: #e8101c; }
.num.small { width: 30px; height: 36px; font-size: 17px; flex: none; }
.combo { display: flex; height: 30px; }
.combo-v { flex: 1; background: linear-gradient(#8ca8c8, #6d8cb0); color: #b6c7d9; display: flex; align-items: center; justify-content: center; font-size: 18px; }
.combo-a { width: 28px; background: #2a2c30; position: relative; flex: none; }
.combo-a::after { content: ''; position: absolute; left: 9px; top: 12px; border-left: 5px solid transparent; border-right: 5px solid transparent; border-top: 6px solid #e8e8e8; }
.q-row .spin { height: 30px; }
.byp { height: 32px; font-size: 17.5px; }
.x-panel { flex: 1; }
.x-top { display: flex; gap: 8px; padding: 25px 0 0 194px; }
.x-cols { display: flex; margin: 10px 0 0 60px; }
.xf { width: 251px; flex: none; display: flex; }
.xf-left { width: 141px; flex: none; display: flex; flex-direction: column; }
.xf-head { display: flex; align-items: center; gap: 2px; height: 34px; font-size: 18.5px; white-space: nowrap; margin-left: 4px; color: #cfd2d5; }
.xb { width: 134px; height: 33px; font-size: 18px; flex: none; }
.xb.on { background: linear-gradient(#3da1a6, #359095); color: #eef6f6; border-color: #2d7f83; }
.xf-types { display: flex; flex-direction: column; gap: 8px; margin-top: 105px; }
.slopes { display: grid; grid-template-columns: repeat(4, 30px); gap: 9px 3px; margin: 23px 0 0 6px; }
.slope { height: 28px; background: #3a3d44; display: flex; align-items: center; justify-content: center; font-size: 17px; border-radius: 2px; color: #d6d9dc; }
.slope.on { background: #3a9ea3; color: #eaf6f6; }
.xf-right { width: 110px; flex: none; margin-top: 35px; display: flex; flex-direction: column; }
.s-x { width: 85px; height: 26px; margin: 2px 0 0 11px; }
.xf-lab { text-align: center; font-size: 18.5px; line-height: 23px; margin: 1px 0 0 -2px; color: #cfd2d5; }

/* knobs */
.kcol { width: 121px; flex: none; display: flex; flex-direction: column; align-items: center; }
.klab { height: 44px; text-align: center; font-size: 19px; line-height: 22px; color: #cfd2d5; white-space: nowrap; }
.klab.red { color: #d8141c; }
.klab.green { color: #1ca41c; }
.kspin { width: 87px; height: 26px; margin-top: 4px; }
.knob { width: 84px; height: 84px; margin-top: 5px; border-radius: 50%; display: flex; align-items: center; justify-content: center; background: conic-gradient(from -105deg, #1f6f92 0 210deg, #2b2e33 210deg 360deg); }
.knob-in { width: 72px; height: 72px; border-radius: 50%; background: #1a1b20; display: flex; align-items: center; justify-content: center; }
.knob-face { width: 60px; height: 60px; border-radius: 50%; position: relative; background: conic-gradient(#fbfbfb, #9c9c9c 12%, #f2f2f2 25%, #8e8e8e 37%, #f0f0f0 50%, #8a8a8a 62%, #f4f4f4 75%, #9a9a9a 87%, #fbfbfb); }
.knob-dot { position: absolute; width: 8px; height: 8px; margin: -4px 0 0 -4px; background: #1a1a1c; border-radius: 50%; }

/* noise gate */
.ng { display: grid; grid-template-columns: 874px 874px; grid-template-rows: 517px 515px; gap: 6px 4px; padding: 9px 0 0 2px; }
.ng-title { height: 30px; padding-top: 8px; box-sizing: border-box; text-align: center; font-size: 20px; color: #cfd2d5; }
.ng-row { display: flex; margin: 10px 0 0 252px; }
.ng-side { margin: 32px 0 0 108px; display: flex; flex-direction: column; gap: 10px; }
.side-b { width: 106px; height: 31px; font-size: 19px; flex: none; }

/* comp */
.comp { display: grid; grid-template-columns: 1436px 303px; grid-template-rows: 518px 522px; gap: 10px 7px; padding-left: 1px; margin-top: -2px; }
.comp-panel { display: flex; }
.cp-knobs { display: flex; margin-top: 247px; height: 200px; flex: none; }
.cp-knobs.low { margin-top: 263px; }
.cp-k { width: 130px; }
.cp-k .kspin { margin-top: 9px; }
.cp-k .knob { margin-top: 15px; }
.cp-side { margin: 217px 0 0 38px; display: flex; flex-direction: column; gap: 8px; flex: none; }
.cp-side.low { margin: 60px 0 0 33px; }
.unit { text-align: center; font-size: 19px; margin-top: 20px; height: 22px; }
.chb.u { width: 106px; height: 32px; }

/* promo */
.promo { width: 1335px; height: 360px; margin-top: 12px; display: flex; flex-direction: column; align-items: center; padding-top: 7px; box-sizing: border-box; color: #060606; font-weight: 700; font-size: 134px; line-height: 162px; white-space: nowrap; -webkit-text-stroke: 7px #060606; }
.promo-a { display: block; transform: scaleX(0.785); margin-right: 32px; flex: none; }
.promo-b { display: block; transform: scaleX(0.755); flex: none; }
</style>
